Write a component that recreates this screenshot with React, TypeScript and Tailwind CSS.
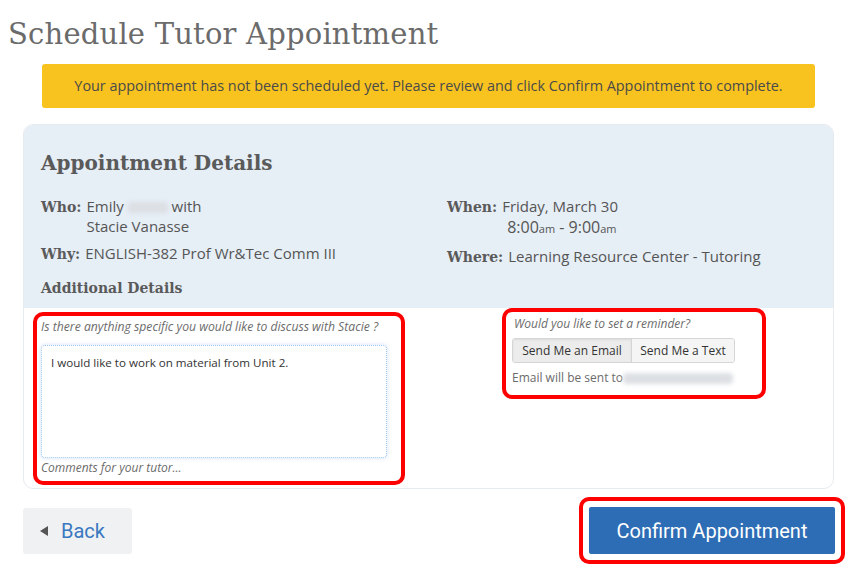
import React from "react";

const slab = "font-['DejaVu_Serif',serif]";
const sans = "font-['Open_Sans',sans-serif]";
const roboto = "font-['Roboto',sans-serif]";

function Label({ children }: { children: React.ReactNode }) {
  return <span className={`${slab} text-[14px] font-bold text-[#5a5a5a]`}>{children}</span>;
}

function Blur({ w }: { w: number }) {
  return (
    <span
      className="inline-block h-[11px] rounded-sm bg-[#dcdfe3] align-middle blur-[2px]"
      style={{ width: w }}
    />
  );
}

export default function App() {
  return (
    <div className={`min-h-[570px] w-[857px] bg-white ${sans} text-[#555]`}>
      <h1 className={`${slab} pl-[8px] pt-[14px] text-[29px] font-normal leading-[40px] tracking-[0.2px] text-[#6b6b6b]`}>
        Schedule Tutor Appointment
      </h1>

      <div className="mx-[42px] mt-[10px] flex h-[44px] items-center justify-center rounded-[3px] bg-[#f9c31f] text-[14.4px] text-[#4a4a4a]">
        Your appointment has not been scheduled yet. Please review and click Confirm Appointment to complete.
      </div>

      <div className="mx-[23px] mt-[16px] h-[365px] overflow-hidden rounded-[10px] border border-[#e6ebf0] bg-white">
        <div className="h-[183px] bg-[#e6eef6] px-[17px] pt-[25px]">
          <h2 className={`${slab} text-[20px] font-bold leading-[26px] text-[#5a5a5a]`}>Appointment Details</h2>
          <div className="mt-[20px] grid grid-cols-[406px_1fr]">
            <div className="flex flex-col gap-[7px]">
              <div className="flex items-baseline gap-[5px] text-[15px] leading-[20px]">
                <Label>Who:</Label>
                <div>
                  <div>
                    Emily <Blur w={40} /> with
                  </div>
                  <div>Stacie Vanasse</div>
                </div>
              </div>
              <div className="flex items-baseline gap-[5px] text-[15px] leading-[20px]">
                <Label>Why:</Label>
                <span>ENGLISH-382 Prof Wr&amp;Tec Comm III</span>
              </div>
            </div>
            <div className="flex flex-col gap-[6px]">
              <div className="flex items-baseline gap-[5px] text-[15px] leading-[20px]">
                <Label>When:</Label>
                <div>
                  <div>Friday, March 30</div>
                  <div className="pl-[5px] text-[16px] leading-[22px]">
                    8:00<span className="text-[11px]">am</span> - 9:00<span className="text-[11px]">am</span>
                  </div>
                </div>
              </div>
              <div className="flex items-baseline gap-[5px] text-[15px] leading-[20px]">
                <Label>Where:</Label>
                <span>Learning Resource Center - Tutoring</span>
              </div>
            </div>
          </div>
          <h3 className={`${slab} mt-[11px] text-[14px] font-bold text-[#5a5a5a]`}>Additional Details</h3>
        </div>

        <div className="flex items-start px-[9px] pt-[4px]">
          <div className="w-[372px] rounded-[10px] border-4 border-[#ff0000] px-[4px] pb-[4px] pt-[2px]">
            <div className="text-[12.2px] italic leading-[18px] text-[#6b6b6b]">
              Is there anything specific you would like to discuss with Stacie ?
            </div>
            <div className="mt-[9px] h-[113px] w-[346px] rounded-[4px] border border-dotted border-[#9cc8ef] bg-white px-[9px] py-[8px] text-[11.6px] text-[#333] shadow-[0_0_4px_rgba(120,170,230,0.35)]">
              I would like to work on material from Unit 2.
            </div>
            <div className="mt-[1px] text-[12px] italic leading-[18px] text-[#6b6b6b]">Comments for your tutor...</div>
          </div>

          <div className="ml-[97px] -mt-[4px] w-[264px] rounded-[10px] border-4 border-[#ff0000] px-[6px] pb-[8px] pt-[3px]">
            <div className="pl-[2px] text-[12px] italic leading-[18px] text-[#6b6b6b]">Would you like to set a reminder?</div>
            <div className="mt-[5px] flex h-[25px] w-[223px] overflow-hidden rounded-[3px] border border-[#d5d5d5] text-[12px] text-[#333]">
              <button className="w-[118px] bg-[#ececec] shadow-[inset_0_1px_2px_rgba(0,0,0,0.08)]">Send Me an Email</button>
              <button className="flex-1 border-l border-[#d5d5d5] bg-[#f5f5f5]">Send Me a Text</button>
            </div>
            <div className="mt-[6px] text-[12px] leading-[18px] text-[#6b6b6b]">
              Email will be sent to<Blur w={110} />
            </div>
          </div>
        </div>
      </div>

      <div className="mt-[8px] flex items-center justify-between pl-[23px] pr-[12px]">
        <button className={`mt-[1px] flex h-[46px] w-[109px] items-center gap-[13px] rounded-[3px] bg-[#f0f1f3] pl-[17px] ${roboto} text-[20px] text-[#3a78c0]`}>
          <svg width="8" height="10" viewBox="0 0 8 10">
            <path d="M8 0 L0 5 L8 10 Z" fill="#555" />
          </svg>
          Back
        </button>
        <div className="rounded-[10px] border-4 border-[#ff0000] p-[6px]">
          <button className={`h-[47px] w-[246px] rounded-[2px] bg-[#2d6db5] ${roboto} text-[20px] text-white`}>
            Confirm Appointment
          </button>
        </div>
      </div>
    </div>
  );
}
